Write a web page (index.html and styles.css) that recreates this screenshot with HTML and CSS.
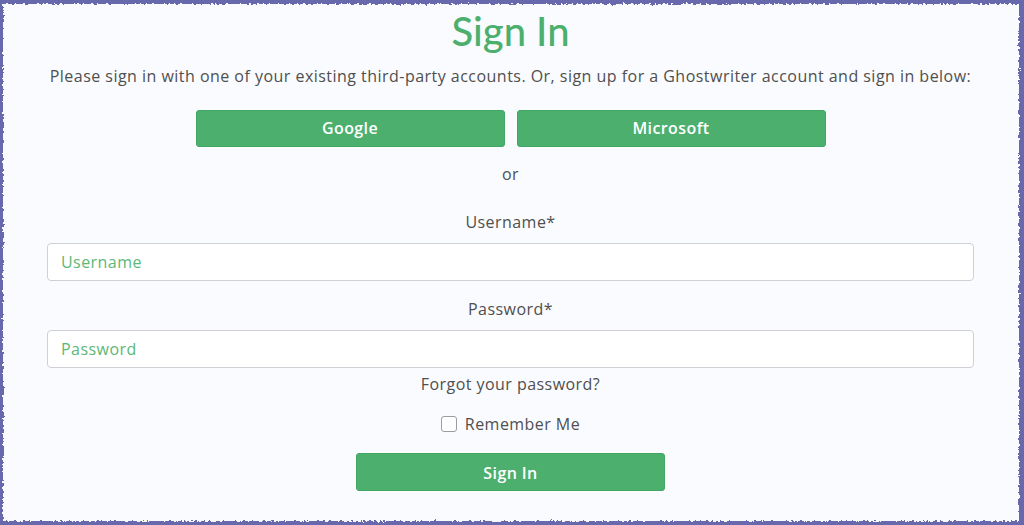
FILE: index.html
```html
<!DOCTYPE html>
<html lang="en">
<head>
    <meta charset="UTF-8">
    <meta name="viewport" content="width=device-width, initial-scale=1.0">
    <title>Ghostwriter Sign In</title>
    <link rel="stylesheet" href="styles.css">
</head>
<body>
    <svg class="defs" width="0" height="0" aria-hidden="true">
        <filter id="rough">
            <feTurbulence type="fractalNoise" baseFrequency="0.35" numOctaves="2" seed="4" result="noise"/>
            <feDisplacementMap in="SourceGraphic" in2="noise" scale="5" xChannelSelector="R" yChannelSelector="G"/>
        </filter>
    </svg>
    <div class="page">
        <div class="paper"></div>
        <main class="signin">
            <h1>Sign In</h1>
            <p class="lead">Please sign in with one of your existing third-party accounts. Or, sign up for a Ghostwriter account and sign in below:</p>
            <div class="social">
                <a class="btn" href="#">Google</a>
                <a class="btn" href="#">Microsoft</a>
            </div>
            <p class="or">or</p>
            <form class="login-form">
                <label for="username">Username*</label>
                <input type="text" id="username" placeholder="Username">
                <label for="password" class="second">Password*</label>
                <input type="password" id="password" placeholder="Password">
                <a class="forgot" href="#">Forgot your password?</a>
                <div class="remember">
                    <input type="checkbox" id="remember">
                    <label for="remember">Remember Me</label>
                </div>
                <button type="submit" class="btn submit">Sign In</button>
            </form>
        </main>
    </div>
</body>
</html>
```

FILE: styles.css
```css
body {
    margin: 0;
    height: 525px;
    background: #6869ad;
    font-family: "Open Sans", "Liberation Sans", sans-serif;
    letter-spacing: 0.45px;
    color: #4f4f4f;
    overflow: hidden;
}
.defs {
    position: absolute;
}
.page {
    position: relative;
    height: 525px;
}
.paper {
    position: absolute;
    top: 4px;
    left: 3px;
    right: 5px;
    bottom: 4px;
    background: #fafbfe;
    filter: url(#rough);
}
.signin {
    position: relative;
    width: 927px;
    margin-left: 47px;
    padding-top: 6px;
    text-align: center;
}
h1 {
    margin: 0;
    font-family: Lato, sans-serif;
    font-weight: 500;
    font-size: 40px;
    line-height: 50px;
    letter-spacing: 0;
    color: #4caf6e;
}
.lead {
    margin: 8px 0 0;
    font-size: 16px;
    line-height: 24px;
    letter-spacing: 0.47px;
}
.social {
    display: flex;
    justify-content: center;
    gap: 12px;
    margin-top: 22px;
}
.btn {
    display: block;
    box-sizing: border-box;
    width: 309px;
    height: 37px;
    line-height: 35px;
    background: #4caf6e;
    border: 1px solid #3fa762;
    border-radius: 3px;
    color: #fff;
    font-family: "Open Sans", sans-serif;
    font-size: 16px;
    font-weight: 600;
    letter-spacing: 0.4px;
    text-decoration: none;
}
.or {
    margin: 15px 0 0;
    font-size: 16px;
    line-height: 24px;
}
.login-form {
    display: flex;
    flex-direction: column;
    align-items: center;
    margin-top: 24px;
}
.login-form > label {
    font-size: 16px;
    line-height: 24px;
}
.login-form > label.second {
    margin-top: 16px;
}
.login-form > input {
    box-sizing: border-box;
    width: 100%;
    height: 38px;
    margin-top: 9px;
    padding: 0 13px;
    background: #fff;
    border: 1px solid #ced0d6;
    border-radius: 4px;
    font-family: "Open Sans", sans-serif;
    font-size: 16px;
    letter-spacing: 0.45px;
    color: #4f4f4f;
}
.login-form > input::placeholder {
    color: #5cb877;
}
.forgot {
    margin-top: 4px;
    font-size: 16px;
    line-height: 24px;
    color: #4f4f4f;
    text-decoration: none;
}
.remember {
    display: flex;
    align-items: center;
    gap: 8px;
    margin-top: 16px;
    height: 24px;
    font-size: 16px;
}
.remember input {
    appearance: none;
    width: 16px;
    height: 16px;
    margin: 0;
    background: #fff;
    border: 1px solid #9a9ca3;
    border-radius: 3px;
}
.submit {
    height: 38px;
    line-height: 36px;
    margin-top: 17px;
    cursor: pointer;
}
```
